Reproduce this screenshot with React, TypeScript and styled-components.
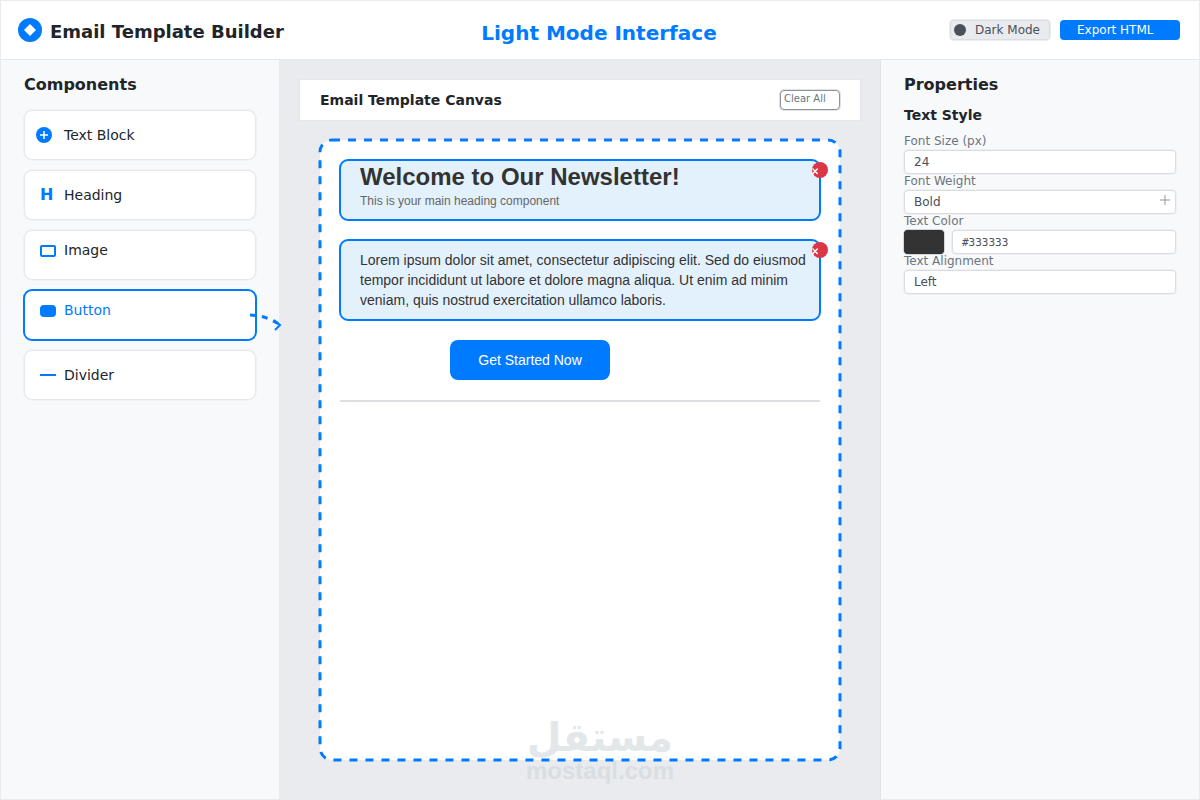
import React from "react";
import styled, { createGlobalStyle, css } from "styled-components";

const blue = "#007bff";
const ink = "#212529";
const muted = "#6c757d";

const GlobalStyle = createGlobalStyle`
  *, *::before, *::after { box-sizing: border-box; }
  body { margin: 0; font-family: "DejaVu Sans", sans-serif; color: ${ink}; }
  h1, h2, h3, p { margin: 0; }
  button, input, select { font: inherit; margin: 0; }
`;

const Page = styled.div`
  position: relative;
  display: grid;
  grid-template-rows: 60px 1fr;
  min-height: 100vh;
  background: #fff;

  &::after {
    content: "";
    position: absolute;
    inset: 0;
    border: 1px solid #e9ecef;
    pointer-events: none;
  }
`;

const Header = styled.header`
  display: grid;
  grid-template-columns: 1fr auto 1fr;
  align-items: center;
  padding: 0 20px 0 18px;
  border-bottom: 1px solid #e6e8eb;
`;

const Brand = styled.div`
  display: flex;
  align-items: center;
  gap: 8px;
`;

const BrandName = styled.h1`
  padding-top: 4px;
  font-size: 18px;
  line-height: 24px;
  white-space: nowrap;
`;

const ModeTitle = styled.p`
  padding-top: 6px;
  font-size: 20px;
  font-weight: bold;
  line-height: 24px;
  color: ${blue};
`;

const Actions = styled.div`
  display: flex;
  align-items: center;
  justify-content: flex-end;
  gap: 10px;
`;

const HeaderButton = styled.button<{ $primary?: boolean }>`
  display: flex;
  align-items: center;
  gap: 9px;
  height: 20px;
  border-radius: 4px;
  font-size: 12px;
  line-height: 16px;
  white-space: nowrap;
  ${({ $primary }) =>
    $primary
      ? css`
          width: 120px;
          padding: 0 17px;
          border: 0;
          background: ${blue};
          color: #fff;
        `
      : css`
          width: 100px;
          padding: 0 3px;
          border: 1px solid #dadee2;
          box-shadow: 0 0 0 1px #eceef0;
          background: #e9ebee;
          color: #495057;
        `}
`;

const Workspace = styled.div`
  display: grid;
  grid-template-columns: 280px minmax(0, 1fr) 320px;
`;

const Palette = styled.aside`
  padding: 15px 22px 24px 23px;
  border-right: 1px solid #e9ebef;
  background: #f8f9fb;
`;

const Inspector = styled.aside`
  padding: 15px 24px 24px 23px;
  border-left: 1px solid #e1e4e8;
  background: #f8f9fb;
`;

const PanelTitle = styled.h2`
  font-size: 16px;
  line-height: 20px;

  ${Palette} & { padding-left: 1px; }
`;

const ComponentList = styled.div`
  display: grid;
  gap: 8px;
  margin-top: 14px;
`;

const ComponentCard = styled.button<{ $raised?: boolean; $active?: boolean }>`
  position: relative;
  display: flex;
  align-items: center;
  gap: 8px;
  padding: 0 11px ${({ $raised }) => ($raised ? 10 : 0)}px;
  background: #fff;
  font-size: 14px;
  line-height: 20px;
  text-align: left;
  ${({ $active }) =>
    $active
      ? css`
          height: 52px;
          border: 2px solid ${blue};
          border-radius: 9px;
          color: ${blue};
        `
      : css`
          && { margin: 1px; }
          height: 50px;
          border: 1px solid #e6e8eb;
          border-radius: 8px;
          box-shadow: 0 0 0 1px #f1f2f4;
          color: ${ink};
        `}
`;

const DragArrow = styled.svg`
  position: absolute;
  top: 18px;
  right: -27px;
`;

const Stage = styled.main`
  display: flex;
  flex-direction: column;
  gap: 20px;
  padding: 20px 20px 40px;
  background: #e9ebef;
`;

const StageBar = styled.div`
  display: flex;
  align-items: center;
  justify-content: space-between;
  height: 40px;
  padding: 0 20px;
  background: #fff;
  box-shadow: 0 0 0 1px #e4e7ea;
`;

const StageTitle = styled.h2`
  font-size: 14px;
  line-height: 20px;
`;

const ClearButton = styled.button`
  width: 60px;
  height: 20px;
  padding: 0 0 2px 3px;
  border: 1px solid #8d949a;
  border-radius: 4px;
  box-shadow: 0 0 0 1px #dfe1e3;
  background: #fff;
  color: ${muted};
  font-size: 10px;
  line-height: 16px;
  text-align: left;
`;

const Paper = styled.section`
  position: relative;
  display: flex;
  flex: 1;
  flex-direction: column;
  align-items: stretch;
  gap: 18px;
  margin: 0 20px;
  padding: 19px;
  border-radius: 12px;
  background: #fff;
  font-family: "Liberation Sans", Arial, sans-serif;
`;

const DashedFrame = styled.svg`
  position: absolute;
  inset: 0;
  width: 100%;
  height: 100%;
  overflow: visible;
  pointer-events: none;
`;

const Block = styled.article<{ $text?: boolean }>`
  position: relative;
  padding: ${({ $text }) => ($text ? "9px 0 9px 19px" : "2px 19px 10px")};
  border: 2px solid ${blue};
  border-radius: 9px;
  background: #e3f1fd;
  color: #333;
`;

const MailHeading = styled.h3`
  font-size: 24px;
  line-height: 28px;
`;

const MailNote = styled.p`
  padding-top: 2px;
  font-size: 12px;
  line-height: 16px;
  color: #666;
`;

const MailText = styled.p`
  font-size: 14px;
  line-height: 20px;
`;

const RemoveButton = styled.button`
  position: absolute;
  top: 1px;
  right: -9px;
  width: 16px;
  height: 16px;
  padding: 0;
  border: 0;
  border-radius: 50%;
  background: #dc3545;

  svg { display: block; }
`;

const MailButton = styled.button`
  align-self: flex-start;
  width: 160px;
  height: 40px;
  margin: 1px 0 1px 111px;
  border: 0;
  border-radius: 8px;
  background: ${blue};
  color: #fff;
  font-size: 14px;
`;

const MailRule = styled.hr`
  width: calc(100% - 2px);
  height: 2px;
  margin: 1px;
  border: 0;
  background: #dcdfe2;
`;

const Watermark = styled.div`
  position: absolute;
  left: 50%;
  bottom: 15px;
  display: flex;
  flex-direction: column;
  align-items: center;
  transform: translateX(-50%);
  color: #ccd4d9;
  font-weight: bold;
  opacity: 0.55;
  pointer-events: none;
`;

const WatermarkName = styled.span`
  font-family: "DejaVu Sans", sans-serif;
  font-size: 40px;
  line-height: 40px;
`;

const WatermarkSite = styled.span`
  font-family: "Liberation Sans", Arial, sans-serif;
  font-size: 24px;
  line-height: 28px;
`;

const SectionTitle = styled.h3`
  padding: 10px 0;
  font-size: 14px;
  line-height: 20px;
`;

const Field = styled.div`
  position: relative;
  display: grid;
  margin-bottom: 1px;
`;

const FieldLabel = styled.label`
  padding-bottom: 3px;
  font-size: 12px;
  line-height: 12px;
  color: ${muted};
`;

const control = css`
  width: 100%;
  height: 24px;
  padding: 0 9px;
  border: 1px solid #d9dde1;
  border-radius: 4px;
  box-shadow: 0 0 0 1px #eef0f2;
  background: #fff;
  color: #495057;
  font-size: 12px;
  line-height: 16px;
`;

const TextInput = styled.input<{ $mono?: boolean }>`
  ${control}
  ${({ $mono }) =>
    $mono &&
    css`
      font-family: "DejaVu Sans Mono", monospace;
      font-size: 11px;
    `}
`;

const Select = styled.select`
  ${control}
  appearance: none;
`;

const SelectMark = styled.svg`
  position: absolute;
  right: 6px;
  bottom: 9px;
  pointer-events: none;
`;

const ColorRow = styled.div`
  display: grid;
  grid-template-columns: 40px 1fr;
  gap: 8px;
`;

const Swatch = styled.input`
  width: 40px;
  height: 24px;
  padding: 0;
  border: 0;
  border-radius: 4px;
  box-shadow: 0 0 0 1px #d3d5d8;
  background: #333;

  &::-webkit-color-swatch-wrapper { padding: 0; }
  &::-webkit-color-swatch { border: 0; border-radius: 4px; }
`;

const Icon = ({ children }: { children: React.ReactNode }) => (
  <svg width="20" height="20" viewBox="0 0 20 20" fill="none" stroke={blue} strokeWidth="2" aria-hidden="true">
    {children}
  </svg>
);

const Remove = ({ label }: { label: string }) => (
  <RemoveButton aria-label={label}>
    <svg width="16" height="16" viewBox="0 0 16 16" stroke="#fff" strokeWidth="1.3">
      <path d="M0.5 6.5 5.7 12M5.7 6.5 0.5 12" />
    </svg>
  </RemoveButton>
);

export default function App() {
  return (
    <>
      <GlobalStyle />
      <Page>
        <Header>
          <Brand>
            <svg width="24" height="24" viewBox="0 0 24 24" aria-hidden="true">
              <circle cx="12" cy="12" r="12" fill={blue} />
              <path d="M12 6 18 12 12 18 6 12Z" fill="#fff" />
            </svg>
            <BrandName>Email Template Builder</BrandName>
          </Brand>
          <ModeTitle>Light Mode Interface</ModeTitle>
          <Actions>
            <HeaderButton>
              <svg width="12" height="12" viewBox="0 0 12 12" aria-hidden="true">
                <circle cx="6" cy="6" r="6" fill="#495057" />
              </svg>
              Dark Mode
            </HeaderButton>
            <HeaderButton $primary>Export HTML</HeaderButton>
          </Actions>
        </Header>
        <Workspace>
          <Palette>
            <PanelTitle>Components</PanelTitle>
            <ComponentList>
              <ComponentCard>
                <Icon>
                  <circle cx="8" cy="10" r="8" fill={blue} stroke="none" />
                  <path d="M8 6v8M4 10h8" stroke="#fff" strokeWidth="1.5" />
                </Icon>
                Text Block
              </ComponentCard>
              <ComponentCard>
                <Icon>
                  <text x="4" y="15" fontSize="16" fontWeight="bold" fill={blue} stroke="none">H</text>
                </Icon>
                Heading
              </ComponentCard>
              <ComponentCard $raised>
                <Icon>
                  <rect x="5" y="6" width="14" height="10" rx="1" />
                </Icon>
                Image
              </ComponentCard>
              <ComponentCard $raised $active>
                <Icon>
                  <rect x="4" y="5" width="16" height="12" rx="4" fill={blue} stroke="none" />
                </Icon>
                Button
                <DragArrow width="36" height="26" viewBox="246 309 36 26" fill="none" stroke={blue} aria-hidden="true">
                  <path d="M250 315Q265 315 280 325" strokeWidth="3" strokeDasharray="6 6" />
                  <path d="M274 320 280 325 275 330" strokeWidth="2" />
                </DragArrow>
              </ComponentCard>
              <ComponentCard>
                <Icon>
                  <path d="M4 10h16" />
                </Icon>
                Divider
              </ComponentCard>
            </ComponentList>
          </Palette>
          <Stage>
            <StageBar>
              <StageTitle>Email Template Canvas</StageTitle>
              <ClearButton>Clear All</ClearButton>
            </StageBar>
            <Paper>
              <Block>
                <MailHeading>Welcome to Our Newsletter!</MailHeading>
                <MailNote>This is your main heading component</MailNote>
                <Remove label="Remove heading" />
              </Block>
              <Block $text>
                <MailText>
                  Lorem ipsum dolor sit amet, consectetur adipiscing elit. Sed do eiusmod tempor incididunt ut labore
                  et dolore magna aliqua. Ut enim ad minim veniam, quis nostrud exercitation ullamco laboris.
                </MailText>
                <Remove label="Remove text" />
              </Block>
              <MailButton>Get Started Now</MailButton>
              <MailRule />
              <DashedFrame aria-hidden="true">
                <rect width="100%" height="100%" rx="12" fill="none" stroke={blue} strokeWidth="3" strokeDasharray="8 8" />
              </DashedFrame>
            </Paper>
          </Stage>
          <Inspector>
            <PanelTitle>Properties</PanelTitle>
            <SectionTitle>Text Style</SectionTitle>
            <Field>
              <FieldLabel htmlFor="size">Font Size (px)</FieldLabel>
              <TextInput id="size" defaultValue="24" />
            </Field>
            <Field>
              <FieldLabel htmlFor="weight">Font Weight</FieldLabel>
              <Select id="weight">
                <option>Bold</option>
                <option>Normal</option>
              </Select>
              <SelectMark width="10" height="10" viewBox="0 0 10 10" stroke="#8f969d" aria-hidden="true">
                <path d="M5 0v10M0 5h10" />
              </SelectMark>
            </Field>
            <Field>
              <FieldLabel htmlFor="hex">Text Color</FieldLabel>
              <ColorRow>
                <Swatch type="color" defaultValue="#333333" aria-label="Pick text color" />
                <TextInput id="hex" $mono defaultValue="#333333" />
              </ColorRow>
            </Field>
            <Field>
              <FieldLabel htmlFor="align">Text Alignment</FieldLabel>
              <Select id="align">
                <option>Left</option>
                <option>Center</option>
                <option>Right</option>
              </Select>
            </Field>
          </Inspector>
        </Workspace>
        <Watermark>
          <WatermarkName lang="ar" dir="rtl">مستقل</WatermarkName>
          <WatermarkSite>mostaql.com</WatermarkSite>
        </Watermark>
      </Page>
    </>
  );
}
